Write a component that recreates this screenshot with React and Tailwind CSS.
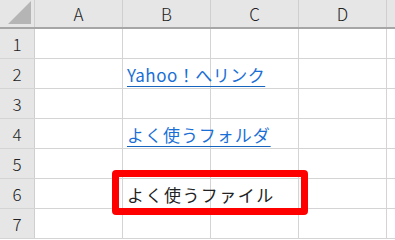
import React from 'react';

const cols = ['A', 'B', 'C', 'D'];

const rows = [
  { n: 1 },
  { n: 2, text: 'Yahoo！へリンク', link: true, track: 'tracking-[0.5px]' },
  { n: 3 },
  { n: 4, text: 'よく使うフォルダ', link: true, track: 'tracking-[1px]' },
  { n: 5 },
  { n: 6, text: 'よく使うファイル', track: 'tracking-[1.5px]' },
  { n: 7 },
];

const font = { fontFamily: '"Noto Sans CJK JP", "Noto Sans", sans-serif' };

export default function App() {
  return (
    <div className="relative w-[395px] h-[240px] overflow-hidden bg-white text-[#222]" style={font}>
      {/* ヘッダー行 */}
      <div className="flex h-[29px] bg-[#e6e6e6] border-b-2 border-[#a6a6a6]">
        <div className="w-[35px] shrink-0 border-r border-[#cfcfcf] flex items-end justify-end pr-[3px] pb-[3px]">
          <svg width="23" height="23" viewBox="0 0 23 23">
            <polygon points="0,23 23,23 23,0" fill="#b5b5b5" />
          </svg>
        </div>
        {cols.map((c) => (
          <div
            key={c}
            className="w-[88px] shrink-0 border-r border-[#cfcfcf] flex items-center justify-center text-[17px] font-light"
          >
            {c}
          </div>
        ))}
        <div className="flex-1" />
      </div>

      {/* 本体 */}
      {rows.map((r) => (
        <div key={r.n} className="flex h-[30px] border-b border-[#d4d4d4]">
          <div className="w-[35px] shrink-0 bg-[#e6e6e6] border-r border-[#cfcfcf] flex items-center justify-center text-[17px] font-light">
            {r.n}
          </div>
          <div className="w-[88px] shrink-0 border-r border-[#d4d4d4]" />
          <div className="w-[88px] shrink-0 border-r border-[#d4d4d4] relative">
            {r.text && (
              <span
                className={
                  'absolute left-[4px] top-[3px] whitespace-nowrap text-[17px] ' +
                  r.track +
                  (r.link ? ' text-[#1a6fd6] underline underline-offset-[4px] decoration-[#1565c0]' : ' text-[#222]')
                }
              >
                {r.text}
              </span>
            )}
          </div>
          <div className="w-[88px] shrink-0 border-r border-[#d4d4d4]" />
          <div className="w-[88px] shrink-0 border-r border-[#d4d4d4]" />
          <div className="flex-1" />
        </div>
      ))}

      {/* 赤枠 */}
      <div className="absolute left-[112px] top-[170px] w-[196px] h-[45px] border-[7px] border-[#ff0000] rounded-[4px]" />
    </div>
  );
}
